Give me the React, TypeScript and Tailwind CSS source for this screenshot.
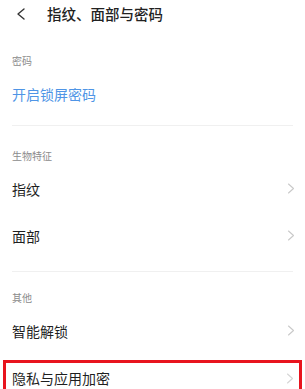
import React from 'react';

const font = { fontFamily: '"Noto Sans CJK SC", "Noto Sans", sans-serif' };

const Chevron: React.FC<{ className?: string }> = ({ className }) => (
  <svg className={className} width="8" height="11" viewBox="0 0 8 11" fill="none">
    <path d="M1.5 1 L6.5 5.5 L1.5 10" stroke="currentColor" strokeWidth="1.1" strokeLinecap="round" strokeLinejoin="round" />
  </svg>
);

const Row: React.FC<{ label: string; blue?: boolean; arrow?: boolean }> = ({ label, blue, arrow = true }) => (
  <div className="h-[47px] flex items-center justify-between pl-[12px] pr-[10px]">
    <span className={`text-[14px] leading-none ${blue ? 'text-[#4f95e6]' : 'text-[#1f1f1f]'}`}>{label}</span>
    {arrow && <Chevron className="text-[#c9c9c9]" />}
  </div>
);

const Label: React.FC<{ text: string; className?: string }> = ({ text, className }) => (
  <div className={`px-[12px] text-[10px] leading-[14px] text-[#8c8c8c] mb-[2px] ${className ?? ''}`}>{text}</div>
);

const Divider: React.FC<{ className?: string }> = ({ className }) => (
  <div className={`mx-[12px] h-px bg-[#f0f0f0] ${className ?? ''}`} />
);

export default function App() {
  return (
    <div className="w-[305px] h-[389px] overflow-hidden bg-white" style={font}>
      <div className="h-[28px] flex items-center">
        <svg className="ml-[16px] text-[#333]" width="10" height="12" viewBox="0 0 10 12" fill="none">
          <path d="M8 1 L2 6 L8 11" stroke="currentColor" strokeWidth="1.4" strokeLinecap="round" strokeLinejoin="round" />
        </svg>
        <span className="ml-[21px] text-[14.5px] font-medium text-[#222] leading-none">指纹、面部与密码</span>
      </div>

      <Label text="密码" className="pt-[26px]" />
      <Row label="开启锁屏密码" blue arrow={false} />
      <Divider className="mt-[8px]" />

      <Label text="生物特征" className="pt-[23px]" />
      <Row label="指纹" />
      <Row label="面部" />
      <Divider className="mt-[12px]" />

      <Label text="其他" className="pt-[19px]" />
      <Row label="智能解锁" />

      <div className="mt-[6px] mx-[3px] border-[3px] border-[#e8141e] h-[40px] flex items-start justify-between pl-[6px] pr-[5px] pt-[8px]">
        <span className="text-[14px] leading-[14px] text-[#1f1f1f]">隐私与应用加密</span>
        <Chevron className="text-[#d5d5d5] mt-[2px]" />
      </div>
    </div>
  );
}
